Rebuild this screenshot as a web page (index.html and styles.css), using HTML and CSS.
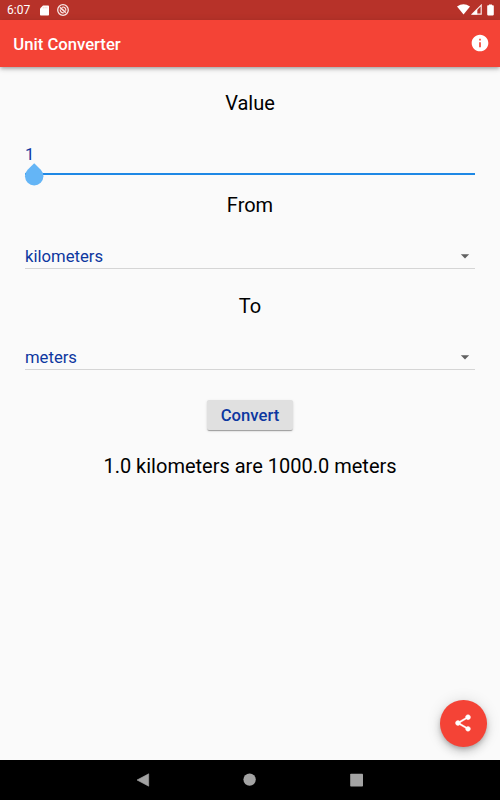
FILE: index.html
```html
<!DOCTYPE html>
<html lang="en">
<head>
    <meta charset="UTF-8">
    <meta name="viewport" content="width=device-width, initial-scale=1.0">
    <title>Unit Converter</title>
    <link rel="stylesheet" href="styles.css">
</head>
<body>
    <div class="status-bar">
        <span class="time">6:07</span>
        <svg class="sd-icon" width="9" height="11" viewBox="0 0 9 11"><path d="M3 0.5H8.2Q9 0.5 9 1.3V9.7Q9 10.5 8.2 10.5H0.8Q0 10.5 0 9.7V3.5Z" fill="#fff"/><path d="M3.3 1.8V3.4M5.1 1.8V3.4M6.9 1.8V3.4" stroke="#e6b8b4" stroke-width="0.6"/></svg>
        <svg class="sync-icon" width="12" height="12" viewBox="0 0 12 12" fill="none" stroke="#f8e6e5"><circle cx="6" cy="6" r="5.3" stroke-width="1.3"/><path d="M3 3.4L8.8 8.6" stroke-width="1.5"/><path d="M4.8 3.4A2.7 2.7 0 0 1 8.6 6.8M3.3 5.4A2.8 2.8 0 0 0 6.8 8.7" stroke-width="1.2"/></svg>
        <div class="status-right">
            <svg width="13" height="11" viewBox="0 0 13 11"><path d="M0 2.5Q6.5 -2.2 13 2.5L6.5 10.6Z" fill="#fff"/></svg>
            <svg class="signal-icon" width="11" height="11" viewBox="0 0 11 11"><path d="M10.2 1.2V10.1H1.3Z" fill="none" stroke="#f9e8e7" stroke-width="1.2"/><path d="M6.3 5V10.4H1Z" fill="#fff"/></svg>
            <svg class="battery-icon" width="7" height="12" viewBox="0 0 7 12"><path d="M2 0.4H5V1.3H6Q6.8 1.3 6.8 2.1V10.6Q6.8 11.4 6 11.4H1Q0.2 11.4 0.2 10.6V2.1Q0.2 1.3 1 1.3H2Z" fill="#fff"/></svg>
        </div>
    </div>
    <header class="app-bar">
        <h1>Unit Converter</h1>
        <svg width="20" height="20" viewBox="0 0 24 24"><path d="M12 2C6.48 2 2 6.48 2 12s4.48 10 10 10 10-4.48 10-10S17.52 2 12 2zm1 15h-2v-6h2v6zm0-8h-2V7h2v2z" fill="#fff"/></svg>
    </header>

    <main class="converter">
        <div class="label">Value</div>
        <div class="field value-field">
            <span>1</span>
            <svg class="cursor-handle" width="20" height="24" viewBox="0 0 20 24"><path d="M10.2 1.2L16.8 7.8A9.2 9.2 0 1 1 3.6 7.8Z" fill="#64b5f6"/></svg>
        </div>
        <div class="label">From</div>
        <div class="field select-field">
            <span>kilometers</span>
            <svg class="arrow" width="20" height="20" viewBox="0 0 24 24"><path d="M7 10l5 5 5-5z" fill="#616161"/></svg>
        </div>
        <div class="label label-to">To</div>
        <div class="field select-field">
            <span>meters</span>
            <svg class="arrow" width="20" height="20" viewBox="0 0 24 24"><path d="M7 10l5 5 5-5z" fill="#616161"/></svg>
        </div>
        <button class="convert-btn">Convert</button>
        <div class="result">1.0 kilometers are 1000.0 meters</div>
    </main>

    <button class="share-btn" aria-label="Share">
        <svg width="20" height="20" viewBox="0 0 24 24"><path d="M18 16.08c-.76 0-1.44.3-1.96.77L8.91 12.7c.05-.23.09-.46.09-.7s-.04-.47-.09-.7l7.05-4.11c.54.5 1.25.81 2.04.81 1.66 0 3-1.34 3-3s-1.34-3-3-3-3 1.34-3 3c0 .24.04.47.09.7L8.04 9.81C7.5 9.31 6.79 9 6 9c-1.66 0-3 1.34-3 3s1.34 3 3 3c.79 0 1.5-.31 2.04-.81l7.12 4.16c-.05.21-.08.43-.08.65 0 1.61 1.31 2.92 2.92 2.92s2.92-1.31 2.92-2.92-1.31-2.92-2.92-2.92z" fill="#fff" stroke="#fff" stroke-width="0.5"/></svg>
    </button>

    <nav class="nav-bar">
        <svg width="14" height="14" viewBox="0 0 14 14"><path d="M12.7 0.8V13.2L1 7Z" fill="#a3a3a3" stroke="#a3a3a3" stroke-width="0.6" stroke-linejoin="round"/></svg>
        <svg width="14" height="14" viewBox="0 0 14 14"><circle cx="6.6" cy="6.6" r="6.2" fill="#a3a3a3"/></svg>
        <svg width="14" height="14" viewBox="0 0 14 14"><rect x="0.2" y="0.8" width="12.8" height="12.8" rx="0.8" fill="#a3a3a3"/></svg>
    </nav>
</body>
</html>
```
FILE: styles.css
```css
* {
    box-sizing: border-box;
}
body {
    margin: 0;
    height: 100vh;
    display: flex;
    flex-direction: column;
    background: #fafafa;
    font-family: Roboto, sans-serif;
    overflow: hidden;
}
svg {
    display: block;
    flex: none;
}
.status-bar {
    height: 20px;
    flex: none;
    display: flex;
    align-items: center;
    padding: 0 6.5px 0 7px;
    background: #b73229;
    color: #fff;
}
.time {
    width: 33.4px;
    font-size: 12px;
    line-height: 20px;
}
.sync-icon {
    margin-left: 7.6px;
}
.status-right {
    display: flex;
    align-items: center;
    margin-left: auto;
    padding-bottom: 1px;
}
.signal-icon {
    margin-left: 1px;
}
.battery-icon {
    margin-left: 5px;
}
.app-bar {
    height: 46.6px;
    flex: none;
    display: flex;
    align-items: center;
    justify-content: space-between;
    padding: 0 10px 0 13.3px;
    background: #f44336;
    box-shadow: 0 1.7px 3.3px -0.8px rgba(0, 0, 0, 0.2), 0 3.3px 4.2px rgba(0, 0, 0, 0.14), 0 0.8px 8.3px rgba(0, 0, 0, 0.12);
}
.app-bar h1 {
    margin: 0;
    padding-top: 2px;
    color: #fff;
    font-size: 16.67px;
    font-weight: 500;
}
.converter {
    flex: 1;
    display: flex;
    flex-direction: column;
    padding: 24.4px 25px 0;
}
.label, .result {
    font-size: 20px;
    line-height: 24px;
    text-align: center;
    color: #000;
}
.field {
    position: relative;
    display: flex;
    color: #0d37a0;
    font-size: 16.67px;
    line-height: 20px;
}
.value-field {
    height: 60px;
    padding-top: 30px;
    margin-bottom: 18px;
    border-bottom: 2px solid #1e88e5;
}
.cursor-handle {
    position: absolute;
    left: -1px;
    top: 47px;
}
.select-field {
    justify-content: space-between;
    height: 52px;
    padding-top: 30px;
    border-bottom: 1px solid #d5d5d5;
}
.arrow {
    margin-top: -1px;
}
.label-to {
    margin-top: 25px;
}
.convert-btn {
    align-self: center;
    width: 86px;
    height: 30px;
    margin-top: 30.4px;
    padding: 0;
    border: none;
    border-radius: 2px;
    background: #e0e0e0;
    color: #0d37a0;
    font-family: inherit;
    font-size: 16.67px;
    font-weight: 500;
    line-height: 32px;
    box-shadow: 0 2px 1px -1px rgba(0, 0, 0, 0.2), 0 1px 1px rgba(0, 0, 0, 0.14), 0 1px 3px rgba(0, 0, 0, 0.12);
}
.result {
    margin-top: 23.6px;
}
.share-btn {
    position: absolute;
    right: 13.3px;
    bottom: 53.3px;
    width: 46.7px;
    height: 46.7px;
    display: flex;
    align-items: center;
    justify-content: center;
    padding: 0;
    border: none;
    border-radius: 50%;
    background: #f44336;
    box-shadow: 0 2.5px 4.2px -0.8px rgba(0, 0, 0, 0.2), 0 5px 8.3px rgba(0, 0, 0, 0.14), 0 0.8px 15px rgba(0, 0, 0, 0.12);
}
.nav-bar {
    height: 40px;
    flex: none;
    display: flex;
    align-items: center;
    justify-content: center;
    gap: 93px;
    background: #000;
}
```
